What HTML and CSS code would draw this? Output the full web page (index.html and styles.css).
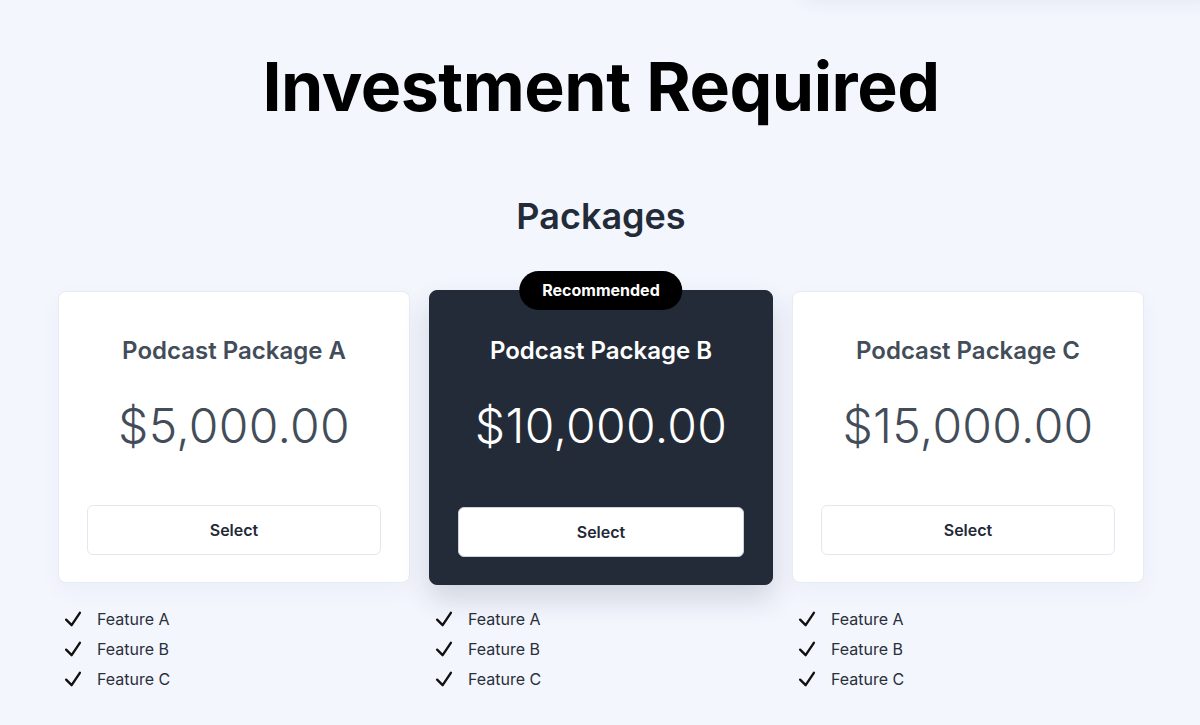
FILE: index.html
```html
<!DOCTYPE html>
<html>
<head>
<meta charset="utf-8">
<link rel="stylesheet" href="styles.css">
</head>
<body>
<div class="topshade"></div>
<main class="page">
  <h1 class="title">Investment Required</h1>
  <h2 class="subtitle">Packages</h2>
  <div class="grid">
    <div class="col">
      <div class="card">
        <h3 class="card-title">Podcast Package A</h3>
        <div class="price">$5,000.00</div>
        <button class="btn">Select</button>
      </div>
      <ul class="features">
        <li><svg class="check" viewBox="0 0 24 24"><path d="M4.5 12.75l6 6 9-13.5"/></svg>Feature A</li>
        <li><svg class="check" viewBox="0 0 24 24"><path d="M4.5 12.75l6 6 9-13.5"/></svg>Feature B</li>
        <li><svg class="check" viewBox="0 0 24 24"><path d="M4.5 12.75l6 6 9-13.5"/></svg>Feature C</li>
      </ul>
    </div>
    <div class="col">
      <div class="card card-dark">
        <span class="badge">Recommended</span>
        <h3 class="card-title">Podcast Package B</h3>
        <div class="price">$10,000.00</div>
        <button class="btn">Select</button>
      </div>
      <ul class="features">
        <li><svg class="check" viewBox="0 0 24 24"><path d="M4.5 12.75l6 6 9-13.5"/></svg>Feature A</li>
        <li><svg class="check" viewBox="0 0 24 24"><path d="M4.5 12.75l6 6 9-13.5"/></svg>Feature B</li>
        <li><svg class="check" viewBox="0 0 24 24"><path d="M4.5 12.75l6 6 9-13.5"/></svg>Feature C</li>
      </ul>
    </div>
    <div class="col">
      <div class="card">
        <h3 class="card-title">Podcast Package C</h3>
        <div class="price">$15,000.00</div>
        <button class="btn">Select</button>
      </div>
      <ul class="features">
        <li><svg class="check" viewBox="0 0 24 24"><path d="M4.5 12.75l6 6 9-13.5"/></svg>Feature A</li>
        <li><svg class="check" viewBox="0 0 24 24"><path d="M4.5 12.75l6 6 9-13.5"/></svg>Feature B</li>
        <li><svg class="check" viewBox="0 0 24 24"><path d="M4.5 12.75l6 6 9-13.5"/></svg>Feature C</li>
      </ul>
    </div>
  </div>
</main>
</body>
</html>
```

FILE: styles.css
```css
* { box-sizing: border-box; }
html, body { margin: 0; padding: 0; }
body {
  background: #f3f6fd;
  font-family: Inter, "Noto Sans", sans-serif;
  color: #1f2937;
  height: 725px;
  overflow: hidden;
  position: relative;
}
.topshade {
  position: absolute;
  top: -40px;
  left: 800px;
  width: 420px;
  height: 40px;
  border-radius: 16px;
  box-shadow: 0 4px 18px rgba(30, 45, 90, 0.06);
}
.page {
  padding: 46px 56px 0 58px;
}
.title {
  margin: 0;
  text-align: center;
  font-size: 68px;
  font-weight: 700;
  letter-spacing: -0.5px;
  color: #000;
  line-height: 80px;
}
.subtitle {
  margin: 68px 0 0;
  text-align: center;
  font-size: 36px;
  font-weight: 600;
  color: #232b38;
  line-height: 44px;
}
.grid {
  display: grid;
  grid-template-columns: 352px 344px 352px;
  column-gap: 19px;
  margin-top: 53px;
}
.col { display: flex; flex-direction: column; }
.card {
  position: relative;
  background: #fff;
  border: 1px solid #e6eaf2;
  border-radius: 8px;
  height: 292px;
  padding: 0 28px 27px;
  display: flex;
  flex-direction: column;
  align-items: center;
  box-shadow: 0 8px 24px rgba(30, 45, 90, 0.04);
}
.col:nth-child(2) .card { height: 295px; margin-top: -1px; }
.col:nth-child(2) .features { margin-top: 19px; }
.card-dark {
  background: #242b38;
  border-color: #242b38;
  box-shadow: 0 14px 28px rgba(30, 40, 70, 0.16);
}
.badge {
  position: absolute;
  top: -20px;
  left: 50%;
  transform: translateX(-50%);
  background: #000;
  color: #fff;
  font-weight: 700;
  font-size: 16px;
  line-height: 39px;
  padding: 0 23px;
  border-radius: 20px;
  white-space: nowrap;
}
.card-title {
  margin: 44px 0 0;
  font-size: 24px;
  font-weight: 600;
  color: #434d5a;
  line-height: 30px;
}
.card-dark .card-title { color: #fff; margin-top: 45px; }
.price {
  margin-top: 32px;
  font-size: 48px;
  font-weight: 300;
  color: #434d5a;
  line-height: 56px;
  letter-spacing: 0.3px;
}
.card-dark .price { color: #fff; }
.btn {
  margin-top: auto;
  width: 100%;
  height: 50px;
  background: #fff;
  border: 1px solid #e2e8f0;
  border-radius: 6px;
  font-family: Inter, sans-serif;
  font-size: 16px;
  font-weight: 600;
  color: #1f2937;
}
.card-dark .btn { border-color: #cbd2dc; }
.features {
  list-style: none;
  margin: 21px 0 0;
  padding: 0 0 0 4px;
}
.features li {
  display: flex;
  align-items: center;
  height: 30px;
  font-size: 16px;
  color: #2a2f3a;
}
.check {
  width: 22px;
  height: 22px;
  margin-right: 13px;
  fill: none;
  stroke: #111;
  stroke-width: 2.6;
  stroke-linecap: round;
  stroke-linejoin: round;
}
```
